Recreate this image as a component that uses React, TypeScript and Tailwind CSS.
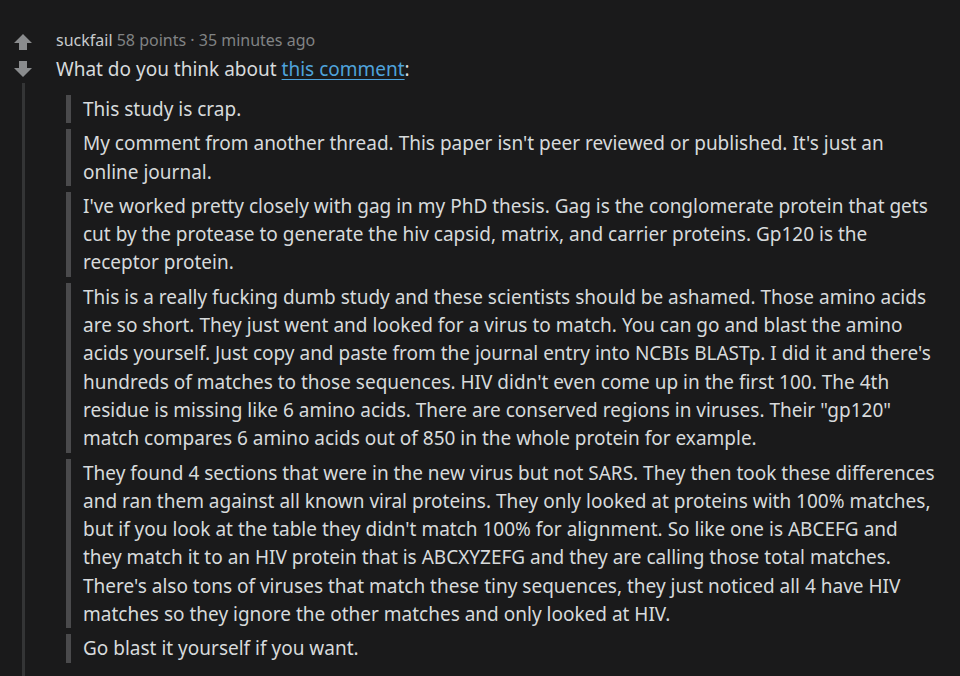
import React from 'react';

const quotes: string[] = [
  'This study is crap.',
  "My comment from another thread. This paper isn't peer reviewed or published. It's just an online journal.",
  "I've worked pretty closely with gag in my PhD thesis. Gag is the conglomerate protein that gets cut by the protease to generate the hiv capsid, matrix, and carrier proteins. Gp120 is the receptor protein.",
  'This is a really fucking dumb study and these scientists should be ashamed. Those amino acids are so short. They just went and looked for a virus to match. You can go and blast the amino acids yourself. Just copy and paste from the journal entry into NCBIs BLASTp. I did it and there\'s hundreds of matches to those sequences. HIV didn\'t even come up in the first 100. The 4th residue is missing like 6 amino acids. There are conserved regions in viruses. Their "gp120" match compares 6 amino acids out of 850 in the whole protein for example.',
  "They found 4 sections that were in the new virus but not SARS. They then took these differences and ran them against all known viral proteins. They only looked at proteins with 100% matches, but if you look at the table they didn't match 100% for alignment. So like one is ABCEFG and they match it to an HIV protein that is ABCXYZEFG and they are calling those total matches. There's also tons of viruses that match these tiny sequences, they just noticed all 4 have HIV matches so they ignore the other matches and only looked at HIV.",
  'Go blast it yourself if you want.',
];

function VoteArrow({ down }: { down?: boolean }) {
  return (
    <svg width="20" height="18" viewBox="0 0 20 18" className={down ? 'rotate-180' : ''}>
      <path d="M10 1 L19 10 L14 10 L14 17 L6 17 L6 10 L1 10 Z" fill="#8a8c8e" />
    </svg>
  );
}

export default function App() {
  return (
    <div
      className="h-screen w-full bg-[#1a1a1b] text-[#d7dadc] overflow-hidden"
      style={{ fontFamily: '"Noto Sans", "Open Sans", sans-serif' }}
    >
      <div className="flex pt-[29px]">
        {/* vote column + thread line */}
        <div className="flex w-[56px] shrink-0 flex-col items-center pr-[10px]">
          <div className="mt-[4px]">
            <VoteArrow />
          </div>
          <div className="mt-[9px]">
            <VoteArrow down />
          </div>
          <div className="mt-[5px] h-[700px] w-[3px] bg-[#343536]" />
        </div>

        {/* comment body */}
        <div className="w-[890px] shrink-0">
          <div className="text-[16px] leading-[22px] text-[#818384]">
            <span className="text-[#c8cbcd]">suckfail</span> 58 points · 35 minutes ago
          </div>
          <p className="mt-[4px] text-[19px] leading-[28px]">
            What do you think about{' '}
            <a href="#" className="text-[#4fa3dc] underline underline-offset-[3px]">
              this comment
            </a>
            :
          </p>
          <div className="mt-[12px] ml-[10px] flex w-[874px] flex-col gap-[6px]">
            {quotes.map((q, i) => (
              <blockquote
                key={i}
                className="border-l-[5px] border-[#4a4a4c] pl-[12px] text-[19px] leading-[28.3px]"
              >
                {q}
              </blockquote>
            ))}
          </div>
        </div>
      </div>
    </div>
  );
}
